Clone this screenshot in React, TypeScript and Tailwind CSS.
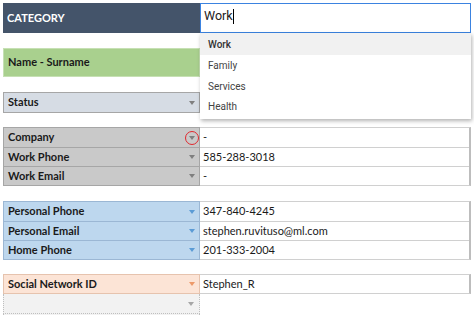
const arrowTone: Record<string, string> = {
  gray: 'border-t-[#7f7f7f]',
  blue: 'border-t-[#5b9bd5]',
  orange: 'border-t-[#ed9a6a]',
  light: 'border-t-[#a6a6a6]',
};

const Arrow = ({ tone = 'gray' }: { tone?: string }) => (
  <span
    className={`w-0 h-0 border-l-[3px] border-r-[3px] border-t-[4px] border-l-transparent border-r-transparent ${arrowTone[tone]}`}
  />
);

type Row = { label: string; value?: string; circled?: boolean };

const Group = ({
  rows,
  bg,
  line,
  tone,
  h = 'h-[19px]',
}: {
  rows: Row[];
  bg: string;
  line: string;
  tone: string;
  h?: string;
}) => (
  <div className="flex w-[468px]">
    <div className={`w-[197px] border ${line} ${bg}`}>
      {rows.map((r, i) => (
        <div
          key={r.label + i}
          className={`${h} flex items-center justify-between pl-[4px] pr-[4px] ${i > 0 ? `border-t ${line}` : ''}`}
        >
          <span className="font-bold text-[11px] text-[#1a1a1a]">{r.label}</span>
          <span className="relative flex items-center">
            <Arrow tone={tone} />
            {r.circled && (
              <span className="absolute -left-[4px] -top-[5px] w-[14px] h-[14px] rounded-full border-[1.5px] border-[#e0282e]" />
            )}
          </span>
        </div>
      ))}
    </div>
    <div className="w-[271px] border-y border-r-2 border-[#d0d0d0] border-r-[#bdbdbd] bg-white">
      {rows.map((r, i) => (
        <div
          key={r.label + i}
          className={`${h} flex items-center pl-[3px] text-[11px] text-[#1a1a1a] ${i > 0 ? 'border-t border-[#d0d0d0]' : ''}`}
        >
          {r.value}
        </div>
      ))}
    </div>
  </div>
);

export default function App() {
  return (
    <div
      className="relative w-[474px] h-[315px] overflow-hidden bg-white pl-[3px] pt-[3px]"
      style={{ fontFamily: 'Lato, "Liberation Sans", sans-serif' }}
    >
      <div className="flex flex-col">
        <div className="flex w-[468px] h-[30px]">
          <div className="w-[197px] bg-[#44546a] flex items-center pl-[4px]">
            <span className="font-bold text-[11px] text-white">CATEGORY</span>
          </div>
          <div className="flex-1 bg-white" />
        </div>

        <div className="h-[15px]" />

        <div className="flex w-[468px] h-[29px]">
          <div className="w-[197px] bg-[#a9d08e] border border-[#c6e0b4] flex items-center pl-[4px]">
            <span className="font-bold text-[11px] text-[#1a1a1a]">Name - Surname</span>
          </div>
          <div className="flex-1 bg-white border border-[#d0d0d0]" />
        </div>

        <div className="h-[15px]" />

        <Group
          rows={[{ label: 'Status' }]}
          bg="bg-[#d6dce4]"
          line="border-[#a6a6a6]"
          tone="gray"
          h="h-[19px]"
        />

        <div className="h-[14px]" />

        <Group
          rows={[
            { label: 'Company', value: '-', circled: true },
            { label: 'Work Phone', value: '585-288-3018' },
            { label: 'Work Email', value: '-' },
          ]}
          bg="bg-[#c9c9c9]"
          line="border-[#a6a6a6]"
          tone="gray"
        />

        <div className="h-[15px]" />

        <Group
          rows={[
            { label: 'Personal Phone', value: '347-840-4245' },
            { label: 'Personal Email', value: 'stephen.ruvituso@ml.com' },
            { label: 'Home Phone', value: '201-333-2004' },
          ]}
          bg="bg-[#bdd7ee]"
          line="border-[#9bb7d4]"
          tone="blue"
        />

        <div className="h-[14px]" />

        <div className="flex w-[468px]">
          <div className="w-[197px]">
            <div className="h-[20px] flex items-center justify-between pl-[4px] pr-[4px] bg-[#fce4d6] border border-[#e6c3ae]">
              <span className="font-bold text-[11px] text-[#1a1a1a]">Social Network ID</span>
              <Arrow tone="orange" />
            </div>
            <div className="h-[20px] flex items-center justify-end pr-[5px] bg-[#f2f2f2] border-x border-b border-dotted border-[#bfbfbf]">
              <Arrow tone="light" />
            </div>
            <div className="h-[20px] bg-[#f2f2f2] border-x border-b border-dotted border-[#bfbfbf]" />
          </div>
          <div className="w-[271px]">
            <div className="h-[20px] flex items-center pl-[3px] text-[11px] text-[#1a1a1a] bg-white border-y border-r-2 border-[#d0d0d0] border-r-[#bdbdbd]">
              Stephen_R
            </div>
          </div>
        </div>
      </div>

      {/* open data validation list */}
      <div className="absolute left-[200px] top-[3px] w-[271px]" style={{ fontFamily: 'Roboto, "Liberation Sans", sans-serif' }}>
        <div className="h-[30px] bg-white border border-[#3b83e0] pl-[3px] pt-[4px] flex items-start">
          <span className="text-[12.5px] text-[#222] leading-[16px]">Work</span>
          <span className="w-px h-[15px] bg-black mt-[1px]" />
        </div>
        <div className="bg-white shadow-[1px_2px_4px_rgba(0,0,0,0.3)] pb-[3px]">
          <div className="h-[22px] bg-[#f1f1f1] flex items-center pl-[8px] text-[10px] font-medium text-[#333]">Work</div>
          <div className="h-[21px] flex items-center pl-[8px] text-[10px] text-[#444]">Family</div>
          <div className="h-[20px] flex items-center pl-[8px] text-[10px] text-[#444]">Services</div>
          <div className="h-[20px] flex items-center pl-[8px] text-[10px] text-[#444]">Health</div>
        </div>
      </div>
    </div>
  );
}
